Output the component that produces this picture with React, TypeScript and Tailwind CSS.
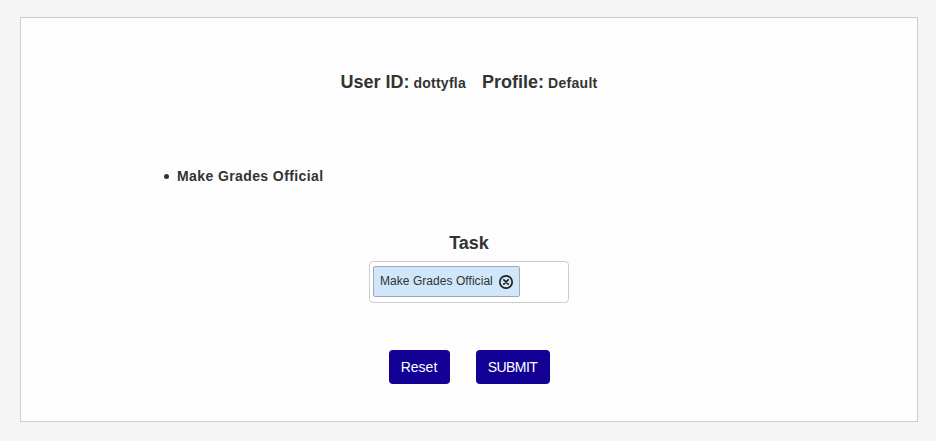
export default function App() {
  return (
    <div className="h-[441px] bg-[#f5f5f5] pt-[17px] px-[18px] font-['Liberation_Sans',Arial,sans-serif] text-[#333333] overflow-hidden">
      <div className="ms-[2px] w-[898px] h-[405px] bg-[#fdfdfd] border border-[#cccccc] flex flex-col items-stretch">
        <div className="mt-[52px] h-[24px] flex items-baseline justify-center font-bold text-[18px] leading-[24px]">
          <span>
            User ID: <span className="-ms-[1px] text-[14px] tracking-[0.25px]">dottyfla</span>
          </span>
          <span className="ms-[16px]">
            Profile: <span className="-ms-[1px] text-[14px] tracking-[0.3px]">Default</span>
          </span>
        </div>
        <ul className="mt-[72px] ps-[143px] font-bold text-[14px] leading-[20px] tracking-[0.4px]">
          <li className="flex items-center gap-[8px]">
            <span className="w-[5px] h-[5px] rounded-full bg-[#333333]" />
            Make Grades Official
          </li>
        </ul>
        <div className="mt-[45px] text-center font-bold text-[18px] leading-[24px]">Task</div>
        <div className="mt-[6px] mx-auto w-[200px] h-[42px] bg-white border border-[#cccccc] rounded-[4px] flex items-start ps-[3px] pt-[4px]">
          <div className="h-[31px] w-[147px] bg-[#cfe6fb] border border-[#a3a9b3] rounded-[2px] flex items-center ps-[6px] gap-[5px] text-[12px] tracking-[0.05px]">
            <span className="pb-[2px]">Make Grades Official</span>
            <svg width="16" height="16" viewBox="0 0 16 16" fill="none" stroke="#222222" strokeWidth="1.7" strokeLinecap="round">
              <circle cx="8" cy="8" r="6.2" />
              <path d="M5.8 5.8l4.4 4.4M10.2 5.8l-4.4 4.4" />
            </svg>
          </div>
        </div>
        <div className="mt-[47px] flex justify-center gap-[26px] text-[14px] text-white">
          <button className="h-[34px] w-[61px] bg-[#130094] rounded-[4px]">Reset</button>
          <button className="h-[34px] w-[74px] bg-[#130094] rounded-[4px] tracking-[-0.6px]">SUBMIT</button>
        </div>
      </div>
    </div>
  );
}
